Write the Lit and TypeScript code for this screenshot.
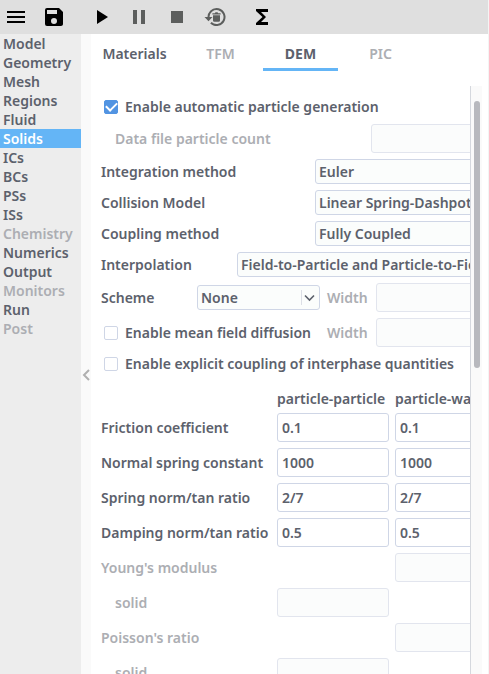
import { LitElement, html, css, svg, nothing } from "lit";
import { customElement, property, state } from "lit/decorators.js";
import { classMap } from "lit/directives/class-map.js";

const ICONS = {
  menu: svg`<path d="M3 18h18v-2H3v2zm0-5h18v-2H3v2zm0-7v2h18V6H3z"/>`,
  save: svg`<path d="M17 3H5a2 2 0 0 0-2 2v14a2 2 0 0 0 2 2h14c1.100 0 2-.9 2-2V7l-4-4zm-5 16a3 3 0 1 1 0-6 3 3 0 0 1 0 6zm3-10H5V5h10v4z"/>`,
  run: svg`<path d="M8 5v14l11-7z"/>`,
  pause: svg`<path d="M6 19h4V5H6v14zm8-14v14h4V5h-4z"/>`,
  stop: svg`<path d="M6 6h12v12H6z"/>`,
  reset: svg`<path d="M13.500 3a9 9 0 0 0-9 9H1.500l4 4.300 4-4.300H6.500a7 7 0 1 1 2.100 5l-1.400 1.400A9 9 0 1 0 13.500 3z"/><path d="M10 10.300h7v5.200a1.300 1.300 0 0 1-1.300 1.300h-4.400a1.300 1.300 0 0 1-1.300-1.300zM9.400 8.200h2.400l.7-.9h2l.7.9h2.400v1.400H9.400z"/>`,
  sum: svg`<path d="M18 4H6v2l6.500 6L6 18v2h12v-3h-7l5-5-5-5h7z"/>`,
};

type IconName = keyof typeof ICONS;

const TOOLS: { icon: IconName; label: string; off?: boolean; gap?: boolean }[] = [
  { icon: "menu", label: "Menu" },
  { icon: "save", label: "Save" },
  { icon: "run", label: "Run", gap: true },
  { icon: "pause", label: "Pause", off: true },
  { icon: "stop", label: "Stop", off: true },
  { icon: "reset", label: "Reset", off: true },
  { icon: "sum", label: "Parameters", gap: true },
];

const SECTIONS = [
  "Model", "Geometry", "Mesh", "Regions", "Fluid", "Solids", "ICs", "BCs", "PSs",
  "ISs", "Chemistry", "Numerics", "Output", "Monitors", "Run", "Post",
];
const SECTIONS_OFF = ["Chemistry", "Monitors", "Post"];

const TABS = ["Materials", "TFM", "DEM", "PIC"];
const TABS_OFF = ["TFM", "PIC"];

/* null: no field in that column */
const MATRIX: { label: string; pp: string | null; pw: string | null; off?: boolean; sub?: boolean }[] = [
  { label: "Friction coefficient", pp: "0.1", pw: "0.1" },
  { label: "Normal spring constant", pp: "1000", pw: "1000" },
  { label: "Spring norm/tan ratio", pp: "2/7", pw: "2/7" },
  { label: "Damping norm/tan ratio", pp: "0.5", pw: "0.5" },
  { label: "Young's modulus", pp: null, pw: "", off: true },
  { label: "solid", pp: "", pw: null, off: true, sub: true },
  { label: "Poisson's ratio", pp: null, pw: "", off: true },
  { label: "solid", pp: "", pw: null, off: true, sub: true },
];

const controls = css`
  * { box-sizing: border-box; }
  button, input, select { font: inherit; color: inherit; margin: 0; }
  button { border: 0; padding: 0; background: none; }
  .field {
    width: 100%;
    min-width: 0;
    height: 29px;
    padding: 0 4px;
    border: 1px solid #cfd6e6;
    border-radius: 3px;
    background: #fff;
  }
  .field:disabled { background: #fbfcfc; border-color: #e2e5ee; }
  .off { color: #acaeb3; }
`;

@customElement("tool-bar")
export class ToolBar extends LitElement {
  static styles = [controls, css`
    :host { display: flex; align-items: center; gap: 14px; height: 34px; padding: 0 4px; background: #dfdfdf; }
    .tool { width: 24px; height: 24px; color: #000; }
    .tool:disabled { color: #5c5e5d; }
    .gap { margin-left: 9px; }
    .glyph { display: block; width: 24px; height: 24px; fill: currentColor; }
  `];

  render() {
    return TOOLS.map((t) => html`
      <button class=${classMap({ tool: true, gap: !!t.gap })} aria-label=${t.label} ?disabled=${!!t.off}>
        <svg class="glyph" viewBox="0 0 24 24" aria-hidden="true">${ICONS[t.icon]}</svg>
      </button>`);
  }
}

@customElement("section-list")
export class SectionList extends LitElement {
  @state() current = "Solids";

  static styles = [controls, css`
    :host { display: flex; flex-direction: column; width: 81px; background: #ededed; }
    .item { height: 19px; padding: 0 3px; line-height: 19px; text-align: left; }
    .item:disabled { color: #acaeb3; }
    .current { background: #64b5f6; color: #fff; }
  `];

  render() {
    return SECTIONS.map((s) => html`
      <button class=${classMap({ item: true, current: s === this.current })}
        ?disabled=${SECTIONS_OFF.includes(s)}
        @click=${() => (this.current = s)}>${s}</button>`);
  }
}

@customElement("choice-box")
export class ChoiceBox extends LitElement {
  @property() label = "";
  @property({ type: Array }) options: string[] = [];

  static styles = [controls, css`
    :host { display: block; position: relative; min-width: 0; }
    .choice {
      display: block;
      appearance: none;
      width: 100%;
      height: 25px;
      padding: 0 24px 0 3px;
      border: 1px solid #cfd6e6;
      border-radius: 3px;
      background: #fbfdfc;
    }
    .arrow {
      position: absolute;
      top: 5px;
      right: 5px;
      width: 14px;
      height: 15px;
      fill: none;
      pointer-events: none;
    }
  `];

  render() {
    return html`
      <select class="choice" aria-label=${this.label}>
        ${this.options.map((o) => html`<option>${o}</option>`)}
      </select>
      <svg class="arrow" viewBox="0 0 14 15" aria-hidden="true">
        <path d="M.5 0v15" stroke="#dcdfe6"/>
        <path d="M4 5.500l4.500 4.500L13 5.500" stroke="#5c616c" stroke-width="1.600"/>
      </svg>`;
  }
}

@customElement("dem-form")
export class DemForm extends LitElement {
  static styles = [controls, css`
    :host { display: flex; flex-direction: column; gap: 6px; min-width: 406px; }
    .row { display: flex; align-items: center; gap: 6px; }
    .check { display: flex; align-items: center; gap: 7px; height: 22px; padding-left: 3px; white-space: nowrap; }
    .box {
      appearance: none;
      display: grid;
      place-items: center;
      width: 14px;
      height: 14px;
      border: 1px solid #cfd6e6;
      border-radius: 2px;
      background: #fff;
    }
    .box:checked { background: #5294e2; border-color: #5294e2; }
    .box:checked::before {
      content: "";
      width: 9px;
      height: 5px;
      margin-bottom: 3px;
      border: solid #fff;
      border-width: 0 0 2px 2px;
      transform: rotate(-45deg);
    }
    .grow { flex: 1; }
    .cap { flex: none; white-space: nowrap; }
    .count { width: 264px; padding-left: 14px; }
    .method { width: 208px; }
    .interp { width: 130px; }
    .scheme { width: 90px; }
    .pick { flex: none; width: 123px; }
    .lead { flex: none; width: 219px; }
    .width { width: 44px; padding-left: 1px; }
    .matrix { display: grid; grid-template-columns: 170px 1fr 1fr; gap: 6px; align-items: center; white-space: nowrap; }
    .head { height: 26px; padding-top: 8px; line-height: 20px; }
    .name { grid-column: 1; }
    .sub { padding-left: 14px; }
    .pp { grid-column: 2; }
    .pw { grid-column: 3; }
  `];

  private choice(label: string, options: string[]) {
    return html`<div class="row">
      <span class="cap method">${label}</span>
      <choice-box class="grow" .label=${label} .options=${options}></choice-box>
    </div>`;
  }

  private cell(cls: string, label: string, value: string | null, off = false) {
    return value === null ? nothing : html`
      <input class="field ${cls}" aria-label=${label} .value=${value} ?disabled=${off}>`;
  }

  render() {
    return html`
      <label class="check"><input class="box" type="checkbox" checked>Enable automatic particle generation</label>
      <div class="row">
        <label class="cap count off" for="count">Data file particle count</label>
        <input class="field grow" id="count" disabled>
      </div>
      ${this.choice("Integration method", ["Euler", "Adams-Bashforth"])}
      ${this.choice("Collision Model", ["Linear Spring-Dashpot", "Hertzian"])}
      ${this.choice("Coupling method", ["Fully Coupled", "One-way Coupled"])}
      <div class="row">
        <span class="cap interp">Interpolation</span>
        <choice-box class="grow" label="Interpolation"
          .options=${["Field-to-Particle and Particle-to-Field", "Field-to-Particle only", "Particle-to-Field only"]}></choice-box>
      </div>
      <div class="row">
        <span class="cap scheme">Scheme</span>
        <choice-box class="pick" label="Scheme" .options=${["None", "Garg 2012", "DPVM Square"]}></choice-box>
        <label class="cap width off" for="scheme-width">Width</label>
        <input class="field grow" id="scheme-width" disabled>
      </div>
      <div class="row">
        <label class="check lead"><input class="box" type="checkbox">Enable mean field diffusion</label>
        <label class="cap width off" for="diffusion-width">Width</label>
        <input class="field grow" id="diffusion-width" disabled>
      </div>
      <label class="check"><input class="box" type="checkbox">Enable explicit coupling of interphase quantities</label>
      <div class="matrix">
        <span class="head pp">particle-particle</span>
        <span class="head pw">particle-wall</span>
        ${MATRIX.map((m) => html`
          <span class=${classMap({ name: true, sub: !!m.sub, off: !!m.off })}>${m.label}</span>
          ${this.cell("pp", `${m.label}, particle-particle`, m.pp, m.off)}
          ${this.cell("pw", `${m.label}, particle-wall`, m.pw, m.off)}`)}
      </div>`;
  }
}

@customElement("app-root")
export class AppRoot extends LitElement {
  @state() tab = "DEM";

  static styles = [controls, css`
    :host {
      display: flex;
      flex-direction: column;
      height: 100vh;
      overflow: hidden;
      box-sizing: border-box;
      border-right: 1px solid #f4f4f4;
      background: #fff;
      color: #5c616c;
      font: 600 14px/20px "Noto Sans", "Open Sans", sans-serif;
    }
    .body { display: flex; flex: 1; min-height: 0; }
    .splitter { flex: none; width: 10px; padding-top: 334px; background: #fafafa; }
    .fold { display: block; width: 10px; height: 14px; }
    .chevron { display: block; width: 10px; height: 14px; fill: none; stroke: #b0b0b0; stroke-width: 2; }
    .pane { display: flex; flex-direction: column; flex: 1; min-width: 0; }
    .tabs { display: flex; gap: 5px; height: 37px; margin-bottom: 15px; }
    .tab { width: 75px; padding-top: 5px; border-bottom: 3px solid transparent; }
    .tab:first-child { width: 87px; }
    .tab:disabled { color: #acaeb3; }
    .chosen { border-color: #64b5f6; font-weight: 700; }
    .scroller { display: flex; flex: 1; min-height: 0; padding-right: 6px; }
    .view { flex: 1; min-width: 0; overflow: hidden; padding: 10px 0 0 10px; }
    .track { flex: none; width: 12px; padding: 15px 2px 0 3px; border-left: 1px solid #d5d8de; background: #fafafa; }
    .thumb { height: 267px; border-radius: 3px; background: #b8b9be; }
  `];

  render() {
    return html`
      <tool-bar role="toolbar"></tool-bar>
      <div class="body">
        <section-list role="navigation"></section-list>
        <div class="splitter">
          <button class="fold" aria-label="Collapse">
            <svg class="chevron" viewBox="0 0 10 14" aria-hidden="true"><path d="M8 2L3 7l5 5"/></svg>
          </button>
        </div>
        <main class="pane">
          <div class="tabs" role="tablist">
            ${TABS.map((t) => html`
              <button role="tab" class=${classMap({ tab: true, chosen: t === this.tab })}
                aria-selected=${t === this.tab} ?disabled=${TABS_OFF.includes(t)}
                @click=${() => (this.tab = t)}>${t}</button>`)}
          </div>
          <div class="scroller">
            <div class="view"><dem-form></dem-form></div>
            <div class="track"><div class="thumb"></div></div>
          </div>
        </main>
      </div>`;
  }
}
